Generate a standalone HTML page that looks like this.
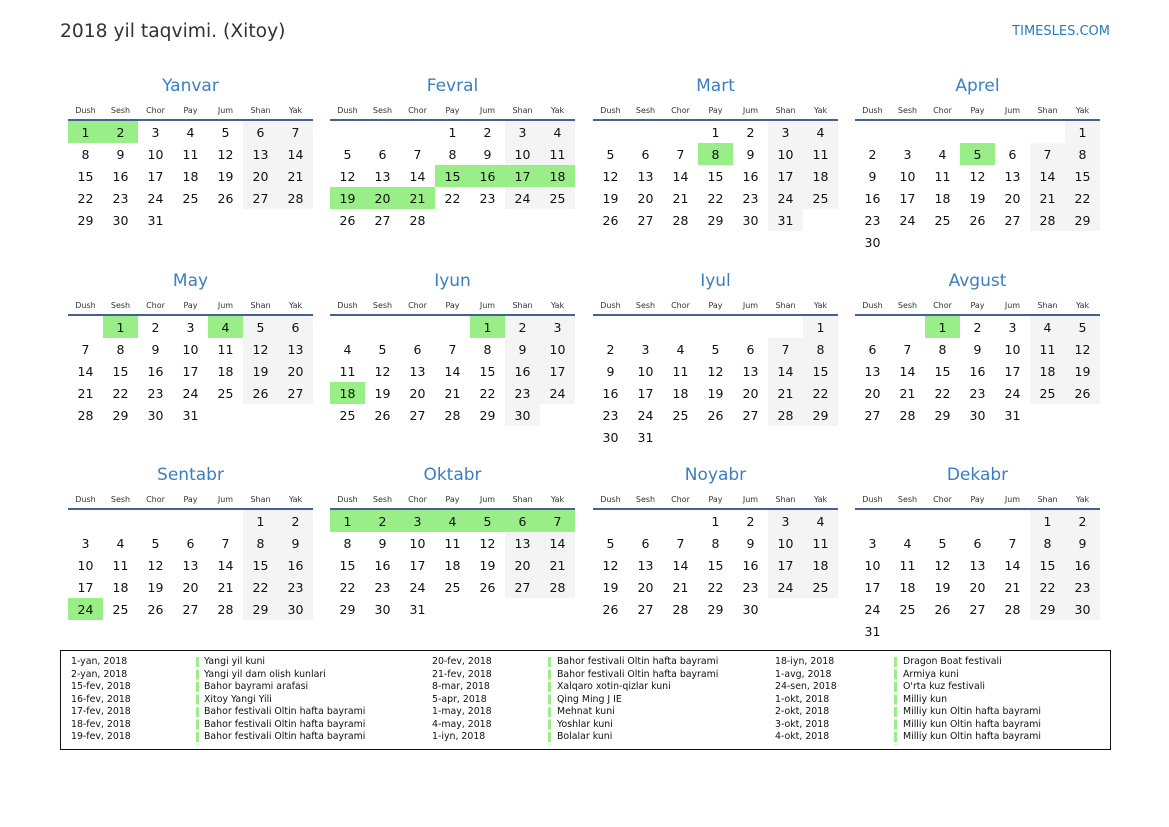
<!DOCTYPE html>
<html><head><meta charset="utf-8"><style>
*{margin:0;padding:0;box-sizing:border-box}
body{width:1169px;height:827px;background:#fff;font-family:"DejaVu Sans","Liberation Sans",sans-serif;color:#111;position:relative;overflow:hidden}
.t{position:absolute;left:60px;top:21px;font-size:18.7px;color:#333}
.logo{position:absolute;right:59px;top:24px;font-size:13px;color:#2a7ac0}
.m{position:absolute;width:245px}
.m h2{font-weight:normal;font-size:17px;color:#3a7fc0;text-align:center;height:20px;line-height:22px}
.m .h{display:flex;margin-top:8px;border-bottom:2px solid #44628f;padding-bottom:16px;box-sizing:content-box;height:0}
.m .h span{width:35px;text-align:center;font-size:8px;color:#333;position:relative;top:3px}
table{border-collapse:collapse;margin-top:0}
td{width:35px;height:22px;text-align:center;font-size:12.5px;padding:0}
td:nth-child(6):not(:empty),td:nth-child(7):not(:empty){background:#f4f4f4}
td.g{background:#99ee88!important}
.lg{position:absolute;left:60px;top:650px;width:1051px;height:100px;border:1.5px solid #111}
.c{position:absolute;top:5px;font-size:9.4px;line-height:12.5px;color:#111}
.b{position:absolute;top:6px;width:3px;height:88px;background:repeating-linear-gradient(#99ee88 0 10px,#fff 10px 12.5px)}
</style></head><body>
<div class="t">2018 yil taqvimi. (Xitoy)</div>
<div class="logo">TIMESLES.COM</div>

<div class="m" style="left:68px;top:75px"><h2>Yanvar</h2><div class="h"><span>Dush</span><span>Sesh</span><span>Chor</span><span>Pay</span><span>Jum</span><span>Shan</span><span>Yak</span></div><table>
<tr><td class="g">1</td><td class="g">2</td><td>3</td><td>4</td><td>5</td><td>6</td><td>7</td></tr>
<tr><td>8</td><td>9</td><td>10</td><td>11</td><td>12</td><td>13</td><td>14</td></tr>
<tr><td>15</td><td>16</td><td>17</td><td>18</td><td>19</td><td>20</td><td>21</td></tr>
<tr><td>22</td><td>23</td><td>24</td><td>25</td><td>26</td><td>27</td><td>28</td></tr>
<tr><td>29</td><td>30</td><td>31</td><td></td><td></td><td></td><td></td></tr></table></div>

<div class="m" style="left:330px;top:75px"><h2>Fevral</h2><div class="h"><span>Dush</span><span>Sesh</span><span>Chor</span><span>Pay</span><span>Jum</span><span>Shan</span><span>Yak</span></div><table>
<tr><td></td><td></td><td></td><td>1</td><td>2</td><td>3</td><td>4</td></tr>
<tr><td>5</td><td>6</td><td>7</td><td>8</td><td>9</td><td>10</td><td>11</td></tr>
<tr><td>12</td><td>13</td><td>14</td><td class="g">15</td><td class="g">16</td><td class="g">17</td><td class="g">18</td></tr>
<tr><td class="g">19</td><td class="g">20</td><td class="g">21</td><td>22</td><td>23</td><td>24</td><td>25</td></tr>
<tr><td>26</td><td>27</td><td>28</td><td></td><td></td><td></td><td></td></tr></table></div>

<div class="m" style="left:593px;top:75px"><h2>Mart</h2><div class="h"><span>Dush</span><span>Sesh</span><span>Chor</span><span>Pay</span><span>Jum</span><span>Shan</span><span>Yak</span></div><table>
<tr><td></td><td></td><td></td><td>1</td><td>2</td><td>3</td><td>4</td></tr>
<tr><td>5</td><td>6</td><td>7</td><td class="g">8</td><td>9</td><td>10</td><td>11</td></tr>
<tr><td>12</td><td>13</td><td>14</td><td>15</td><td>16</td><td>17</td><td>18</td></tr>
<tr><td>19</td><td>20</td><td>21</td><td>22</td><td>23</td><td>24</td><td>25</td></tr>
<tr><td>26</td><td>27</td><td>28</td><td>29</td><td>30</td><td>31</td><td></td></tr></table></div>

<div class="m" style="left:855px;top:75px"><h2>Aprel</h2><div class="h"><span>Dush</span><span>Sesh</span><span>Chor</span><span>Pay</span><span>Jum</span><span>Shan</span><span>Yak</span></div><table>
<tr><td></td><td></td><td></td><td></td><td></td><td></td><td>1</td></tr>
<tr><td>2</td><td>3</td><td>4</td><td class="g">5</td><td>6</td><td>7</td><td>8</td></tr>
<tr><td>9</td><td>10</td><td>11</td><td>12</td><td>13</td><td>14</td><td>15</td></tr>
<tr><td>16</td><td>17</td><td>18</td><td>19</td><td>20</td><td>21</td><td>22</td></tr>
<tr><td>23</td><td>24</td><td>25</td><td>26</td><td>27</td><td>28</td><td>29</td></tr>
<tr><td>30</td><td></td><td></td><td></td><td></td><td></td><td></td></tr></table></div>

<div class="m" style="left:68px;top:270px"><h2>May</h2><div class="h"><span>Dush</span><span>Sesh</span><span>Chor</span><span>Pay</span><span>Jum</span><span>Shan</span><span>Yak</span></div><table>
<tr><td></td><td class="g">1</td><td>2</td><td>3</td><td class="g">4</td><td>5</td><td>6</td></tr>
<tr><td>7</td><td>8</td><td>9</td><td>10</td><td>11</td><td>12</td><td>13</td></tr>
<tr><td>14</td><td>15</td><td>16</td><td>17</td><td>18</td><td>19</td><td>20</td></tr>
<tr><td>21</td><td>22</td><td>23</td><td>24</td><td>25</td><td>26</td><td>27</td></tr>
<tr><td>28</td><td>29</td><td>30</td><td>31</td><td></td><td></td><td></td></tr></table></div>

<div class="m" style="left:330px;top:270px"><h2>Iyun</h2><div class="h"><span>Dush</span><span>Sesh</span><span>Chor</span><span>Pay</span><span>Jum</span><span>Shan</span><span>Yak</span></div><table>
<tr><td></td><td></td><td></td><td></td><td class="g">1</td><td>2</td><td>3</td></tr>
<tr><td>4</td><td>5</td><td>6</td><td>7</td><td>8</td><td>9</td><td>10</td></tr>
<tr><td>11</td><td>12</td><td>13</td><td>14</td><td>15</td><td>16</td><td>17</td></tr>
<tr><td class="g">18</td><td>19</td><td>20</td><td>21</td><td>22</td><td>23</td><td>24</td></tr>
<tr><td>25</td><td>26</td><td>27</td><td>28</td><td>29</td><td>30</td><td></td></tr></table></div>

<div class="m" style="left:593px;top:270px"><h2>Iyul</h2><div class="h"><span>Dush</span><span>Sesh</span><span>Chor</span><span>Pay</span><span>Jum</span><span>Shan</span><span>Yak</span></div><table>
<tr><td></td><td></td><td></td><td></td><td></td><td></td><td>1</td></tr>
<tr><td>2</td><td>3</td><td>4</td><td>5</td><td>6</td><td>7</td><td>8</td></tr>
<tr><td>9</td><td>10</td><td>11</td><td>12</td><td>13</td><td>14</td><td>15</td></tr>
<tr><td>16</td><td>17</td><td>18</td><td>19</td><td>20</td><td>21</td><td>22</td></tr>
<tr><td>23</td><td>24</td><td>25</td><td>26</td><td>27</td><td>28</td><td>29</td></tr>
<tr><td>30</td><td>31</td><td></td><td></td><td></td><td></td><td></td></tr></table></div>

<div class="m" style="left:855px;top:270px"><h2>Avgust</h2><div class="h"><span>Dush</span><span>Sesh</span><span>Chor</span><span>Pay</span><span>Jum</span><span>Shan</span><span>Yak</span></div><table>
<tr><td></td><td></td><td class="g">1</td><td>2</td><td>3</td><td>4</td><td>5</td></tr>
<tr><td>6</td><td>7</td><td>8</td><td>9</td><td>10</td><td>11</td><td>12</td></tr>
<tr><td>13</td><td>14</td><td>15</td><td>16</td><td>17</td><td>18</td><td>19</td></tr>
<tr><td>20</td><td>21</td><td>22</td><td>23</td><td>24</td><td>25</td><td>26</td></tr>
<tr><td>27</td><td>28</td><td>29</td><td>30</td><td>31</td><td></td><td></td></tr></table></div>

<div class="m" style="left:68px;top:464px"><h2>Sentabr</h2><div class="h"><span>Dush</span><span>Sesh</span><span>Chor</span><span>Pay</span><span>Jum</span><span>Shan</span><span>Yak</span></div><table>
<tr><td></td><td></td><td></td><td></td><td></td><td>1</td><td>2</td></tr>
<tr><td>3</td><td>4</td><td>5</td><td>6</td><td>7</td><td>8</td><td>9</td></tr>
<tr><td>10</td><td>11</td><td>12</td><td>13</td><td>14</td><td>15</td><td>16</td></tr>
<tr><td>17</td><td>18</td><td>19</td><td>20</td><td>21</td><td>22</td><td>23</td></tr>
<tr><td class="g">24</td><td>25</td><td>26</td><td>27</td><td>28</td><td>29</td><td>30</td></tr></table></div>

<div class="m" style="left:330px;top:464px"><h2>Oktabr</h2><div class="h"><span>Dush</span><span>Sesh</span><span>Chor</span><span>Pay</span><span>Jum</span><span>Shan</span><span>Yak</span></div><table>
<tr><td class="g">1</td><td class="g">2</td><td class="g">3</td><td class="g">4</td><td class="g">5</td><td class="g">6</td><td class="g">7</td></tr>
<tr><td>8</td><td>9</td><td>10</td><td>11</td><td>12</td><td>13</td><td>14</td></tr>
<tr><td>15</td><td>16</td><td>17</td><td>18</td><td>19</td><td>20</td><td>21</td></tr>
<tr><td>22</td><td>23</td><td>24</td><td>25</td><td>26</td><td>27</td><td>28</td></tr>
<tr><td>29</td><td>30</td><td>31</td><td></td><td></td><td></td><td></td></tr></table></div>

<div class="m" style="left:593px;top:464px"><h2>Noyabr</h2><div class="h"><span>Dush</span><span>Sesh</span><span>Chor</span><span>Pay</span><span>Jum</span><span>Shan</span><span>Yak</span></div><table>
<tr><td></td><td></td><td></td><td>1</td><td>2</td><td>3</td><td>4</td></tr>
<tr><td>5</td><td>6</td><td>7</td><td>8</td><td>9</td><td>10</td><td>11</td></tr>
<tr><td>12</td><td>13</td><td>14</td><td>15</td><td>16</td><td>17</td><td>18</td></tr>
<tr><td>19</td><td>20</td><td>21</td><td>22</td><td>23</td><td>24</td><td>25</td></tr>
<tr><td>26</td><td>27</td><td>28</td><td>29</td><td>30</td><td></td><td></td></tr></table></div>

<div class="m" style="left:855px;top:464px"><h2>Dekabr</h2><div class="h"><span>Dush</span><span>Sesh</span><span>Chor</span><span>Pay</span><span>Jum</span><span>Shan</span><span>Yak</span></div><table>
<tr><td></td><td></td><td></td><td></td><td></td><td>1</td><td>2</td></tr>
<tr><td>3</td><td>4</td><td>5</td><td>6</td><td>7</td><td>8</td><td>9</td></tr>
<tr><td>10</td><td>11</td><td>12</td><td>13</td><td>14</td><td>15</td><td>16</td></tr>
<tr><td>17</td><td>18</td><td>19</td><td>20</td><td>21</td><td>22</td><td>23</td></tr>
<tr><td>24</td><td>25</td><td>26</td><td>27</td><td>28</td><td>29</td><td>30</td></tr>
<tr><td>31</td><td></td><td></td><td></td><td></td><td></td><td></td></tr></table></div>

<div class="lg">
<div class="c" style="left:10px">1-yan, 2018<br>2-yan, 2018<br>15-fev, 2018<br>16-fev, 2018<br>17-fev, 2018<br>18-fev, 2018<br>19-fev, 2018</div>
<div class="b" style="left:135px"></div>
<div class="c" style="left:143px">Yangi yil kuni<br>Yangi yil dam olish kunlari<br>Bahor bayrami arafasi<br>Xitoy Yangi Yili<br>Bahor festivali Oltin hafta bayrami<br>Bahor festivali Oltin hafta bayrami<br>Bahor festivali Oltin hafta bayrami</div>
<div class="c" style="left:371px">20-fev, 2018<br>21-fev, 2018<br>8-mar, 2018<br>5-apr, 2018<br>1-may, 2018<br>4-may, 2018<br>1-iyn, 2018</div>
<div class="b" style="left:487px"></div>
<div class="c" style="left:496px">Bahor festivali Oltin hafta bayrami<br>Bahor festivali Oltin hafta bayrami<br>Xalqaro xotin-qizlar kuni<br>Qing Ming J IE<br>Mehnat kuni<br>Yoshlar kuni<br>Bolalar kuni</div>
<div class="c" style="left:714px">18-iyn, 2018<br>1-avg, 2018<br>24-sen, 2018<br>1-okt, 2018<br>2-okt, 2018<br>3-okt, 2018<br>4-okt, 2018</div>
<div class="b" style="left:833px"></div>
<div class="c" style="left:842px">Dragon Boat festivali<br>Armiya kuni<br>O'rta kuz festivali<br>Milliy kun<br>Milliy kun Oltin hafta bayrami<br>Milliy kun Oltin hafta bayrami<br>Milliy kun Oltin hafta bayrami</div>
</div>
</body></html>
